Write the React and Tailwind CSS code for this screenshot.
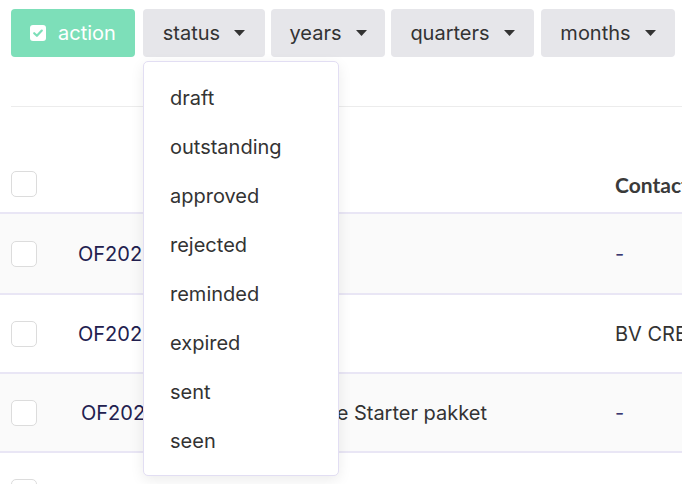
import React from "react";

const Caret = () => (
  <svg width="11" height="6" viewBox="0 0 11 6" className="shrink-0">
    <path d="M0 0 L11 0 L5.5 6 Z" fill="#333333" />
  </svg>
);

const CheckIcon = () => (
  <svg width="16" height="16" viewBox="0 0 16 16" className="shrink-0">
    <rect x="0" y="0" width="16" height="16" rx="3" fill="#ffffff" />
    <path d="M4.2 8.2 L6.9 10.8 L11.8 5.6" fill="none" stroke="#7ddfb9" strokeWidth="2.2" strokeLinecap="round" strokeLinejoin="round" />
  </svg>
);

const Box = () => (
  <div className="w-[26px] h-[26px] shrink-0 rounded-[5px] border-[1.5px] border-[#dcdcdc] bg-white" />
);

const FilterBtn = ({ label, w }) => (
  <button className={`h-[48px] ${w} flex items-center justify-center gap-[14px] rounded-[4px] bg-[#e6e6ea] text-[20px] text-[#333333]`}>
    <span>{label}</span>
    <Caret />
  </button>
);

const rows = [
  { no: "OF202", desc: "", contact: "-", navy: true, bg: "bg-[#fafafa]", h: "h-[81px]", shift: "" },
  { no: "OF202", desc: "", contact: "BV CREATIVE", navy: false, bg: "bg-white", h: "h-[79px]", shift: "" },
  { no: "OF202", desc: "Offerte Starter pakket", contact: "-", navy: true, bg: "bg-[#fafafa]", h: "h-[79px]", shift: "pl-[3px]" },
  { no: "", desc: "", contact: "", navy: true, bg: "bg-white", h: "h-[79px]", shift: "" },
];

export default function App() {
  return (
    <div
      className="relative w-[682px] h-[484px] overflow-hidden bg-white"
      style={{ fontFamily: "Inter, 'Noto Sans', sans-serif" }}
    >
      {/* toolbar */}
      <div className="flex items-center pl-[11px] pt-[9px] gap-[6px]">
        <button className="h-[48px] w-[124px] mr-[2px] flex items-center justify-center gap-[12px] rounded-[4px] bg-[#7ddfb9] text-[20px] text-white">
          <CheckIcon />
          <span>action</span>
        </button>
        <FilterBtn label="status" w="w-[122px]" />
        <FilterBtn label="years" w="w-[114px]" />
        <FilterBtn label="quarters" w="w-[143px]" />
        <div className="ml-[1px]">
          <FilterBtn label="months" w="w-[134px]" />
        </div>
      </div>

      <div className="ml-[11px] mt-[49px] border-t border-[#ececec]" />

      {/* table header */}
      <div className="h-[107px] flex items-end pb-[12px] pl-[11px] border-b-2 border-[#e9e6f5]">
        <div className="flex items-center w-full">
          <Box />
          <div className="ml-[578px] text-[21px] font-bold text-[#3a3a3a] whitespace-nowrap" style={{ fontFamily: "Lato, Inter, sans-serif" }}>
            Contact
          </div>
        </div>
      </div>

      {rows.map((r, i) => (
        <div key={i} className={`${r.h} ${r.bg} flex items-center pl-[11px] border-b-2 border-[#e9e6f5] text-[20px] whitespace-nowrap`}>
          <Box />
          <div className={`ml-[41px] w-[90px] shrink-0 text-[#22204f] ${r.shift}`}>{r.no}</div>
          <div className="w-[319px] shrink-0 text-right text-[#333333] overflow-hidden">{r.desc}</div>
          <div className={`ml-[128px] ${r.navy ? "text-[#3b3870]" : "text-[#333333]"}`}>{r.contact}</div>
        </div>
      ))}

      {/* dropdown */}
      <div className="absolute left-[143px] top-[61px] w-[196px] h-[415px] rounded-[5px] border border-[#e2def3] bg-white shadow-[0_4px_14px_rgba(0,0,0,0.08)] pt-[11px]">
        {["draft", "outstanding", "approved", "rejected", "reminded", "expired", "sent", "seen"].map((s) => (
          <div key={s} className="h-[49px] flex items-center pl-[26px] text-[20px] text-[#333333]">
            {s}
          </div>
        ))}
      </div>
    </div>
  );
}
